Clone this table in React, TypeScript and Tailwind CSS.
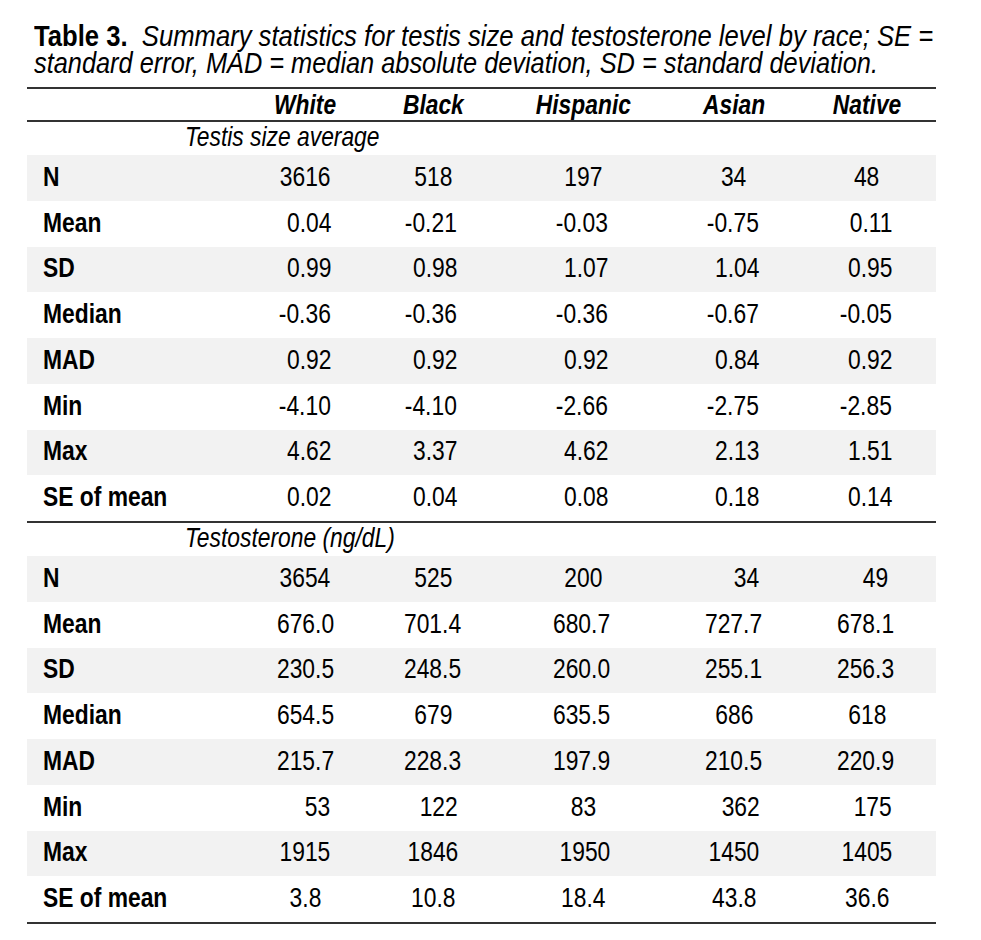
type Cell = { v: string; a: string }

const C = "text-center"
const cols = "grid grid-cols-[214px_129px_126px_174px_128px_138px]"

// the source font is a narrow grotesk, so Liberation Sans is squeezed horizontally
const SQ_R = "inline-block scale-x-[0.815] origin-right"
const SQ_C = "inline-block scale-x-[0.815] origin-center"
const SQ_L = "inline-block scale-x-[0.815] origin-left"

// section 1: decimals right aligned per column, N row centred
const d1 = ["text-right pr-[39px]", "text-right pr-[39px]", "text-right pr-[62px]", "text-right pr-[39px]", "text-right pr-[44px]"]
const mk = (vals: string[], al: string[]): Cell[] => vals.map((v, i) => ({ v, a: al[i] }))

const testis: [string, Cell[]][] = [
  ["N", mk(["3616", "518", "197", "34", "48"], [C, C, C, C, C])],
  ["Mean", mk(["0.04", "-0.21", "-0.03", "-0.75", "0.11"], d1)],
  ["SD", mk(["0.99", "0.98", "1.07", "1.04", "0.95"], d1)],
  ["Median", mk(["-0.36", "-0.36", "-0.36", "-0.67", "-0.05"], d1)],
  ["MAD", mk(["0.92", "0.92", "0.92", "0.84", "0.92"], d1)],
  ["Min", mk(["-4.10", "-4.10", "-2.66", "-2.75", "-2.85"], d1)],
  ["Max", mk(["4.62", "3.37", "4.62", "2.13", "1.51"], d1)],
  ["SE of mean", mk(["0.02", "0.04", "0.08", "0.18", "0.14"], d1)],
]

const d2 = ["text-right pr-[36px]", "text-right pr-[35px]", "text-right pr-[60px]", "text-right pr-[36px]", "text-right pr-[42px]"]
const testo: [string, Cell[]][] = [
  ["N", mk(["3654", "525", "200", "34", "49"], ["text-right pr-[40px]", C, C, "text-right pr-[39px]", "text-right pr-[48px]"])],
  ["Mean", mk(["676.0", "701.4", "680.7", "727.7", "678.1"], d2)],
  ["SD", mk(["230.5", "248.5", "260.0", "255.1", "256.3"], d2)],
  ["Median", mk(["654.5", "679", "635.5", "686", "618"], ["text-right pr-[36px]", C, "text-right pr-[60px]", C, C])],
  ["MAD", mk(["215.7", "228.3", "197.9", "210.5", "220.9"], d2)],
  ["Min", mk(["53", "122", "83", "362", "175"], ["text-right pr-[40px]", "text-right pr-[38px]", "text-right pr-[74px]", "text-right pr-[38px]", "text-right pr-[44px]"])],
  ["Max", mk(["1915", "1846", "1950", "1450", "1405"], ["text-right pr-[40px]", "text-right pr-[38px]", "text-right pr-[60px]", "text-right pr-[39px]", "text-right pr-[44px]"])],
  ["SE of mean", mk(["3.8", "10.8", "18.4", "43.8", "36.6"], [C, C, C, C, C])],
]

const Rule = () => <div className="h-[2px] bg-[#333]" />

function Section({ title, rows }: { title: string; rows: [string, Cell[]][] }) {
  return (
    <div>
      <div className="h-[33px] pt-[1px] pl-[158px] italic leading-[28px] whitespace-nowrap">
        <span className={SQ_L}>{title}</span>
      </div>
      {rows.map(([label, cells], i) => (
        <div key={label} className={`${cols} h-[45.75px] items-center pb-[2px] ${i % 2 === 0 ? "bg-[#f2f2f2]" : ""}`}>
          <div className="pl-[16px] font-bold whitespace-nowrap">
            <span className={SQ_L}>{label}</span>
          </div>
          {cells.map((c, j) => (
            <div key={j} className={`${c.a} whitespace-nowrap`}>
              <span className={c.a === C ? SQ_C : SQ_R}>{c.v}</span>
            </div>
          ))}
        </div>
      ))}
    </div>
  )
}

export default function App() {
  return (
    <div className="w-[981px] h-[940px] overflow-hidden bg-white text-black pl-[27px] font-['Liberation_Sans',Arial,sans-serif] text-[28px] leading-none">
      <div className="w-[909px]">
        <div className="pt-[23px] pb-[10px] pl-[7px] text-[29px] leading-[27px] whitespace-nowrap overflow-hidden">
          <div>
            <span className="inline-block scale-x-[0.884] origin-left">
              <span className="font-bold">Table 3.</span>
              <span className="italic">&nbsp; Summary statistics for testis size and testosterone level by race; SE =</span>
            </span>
          </div>
          <div className="italic">
            <span className="inline-block scale-x-[0.874] origin-left">
              standard error, MAD = median absolute deviation, SD = standard deviation.
            </span>
          </div>
        </div>
        <Rule />
        <div className={`${cols} h-[31px] items-center font-bold italic`}>
          <div />
          {["White", "Black", "Hispanic", "Asian", "Native"].map((h) => (
            <div key={h} className="text-center whitespace-nowrap">
              <span className={SQ_C}>{h}</span>
            </div>
          ))}
        </div>
        <Rule />
        <Section title="Testis size average" rows={testis} />
        <Rule />
        <Section title="Testosterone (ng/dL)" rows={testo} />
        <Rule />
      </div>
    </div>
  )
}
